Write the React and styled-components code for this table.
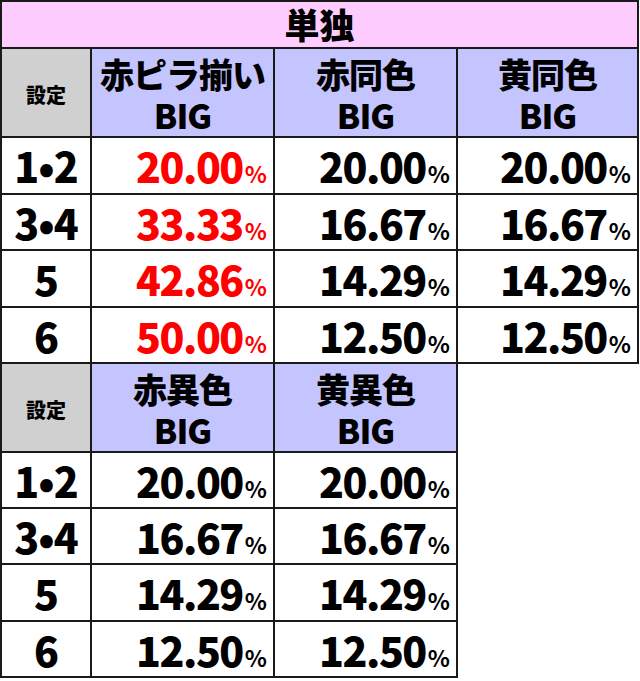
import React from 'react';
import styled, { createGlobalStyle } from 'styled-components';

const GlobalStyle = createGlobalStyle`
  * { box-sizing: border-box; }
  body {
    margin: 0;
    background: #fff;
    font-family: "Noto Sans CJK JP", "Noto Sans", sans-serif;
    color: #000;
  }
`;

const LINE = '#1a1a1a';

const Page = styled.div`
  display: flex;
  flex-direction: column;
  align-items: flex-start;
  width: 640px;
`;

const Table = styled.div`
  display: grid;
  grid-template-columns: ${(p) => p.$cols};
  grid-template-rows: ${(p) => p.$rows};
  border-left: 2px solid ${LINE};
  border-top: ${(p) => (p.$top ? `2px solid ${LINE}` : 'none')};
`;

const Cell = styled.div`
  display: flex;
  align-items: center;
  justify-content: center;
  border-right: 2px solid ${LINE};
  border-bottom: 2px solid ${LINE};
  font-weight: 900;
  color: #000;
`;

const Title = styled(Cell)`
  grid-column: 1 / -1;
  background: #ffccff;
  font-size: 35px;
  line-height: 1;
  padding-bottom: 2px;
`;

const SettingHead = styled(Cell)`
  background: #d0d0d0;
  font-size: 20px;
  line-height: 1;
  padding-top: 4px;
`;

const Head = styled(Cell)`
  flex-direction: column;
  gap: 7px;
  background: #c4c4ff;
  font-size: 34px;
  line-height: 1;
  letter-spacing: -1px;
  text-align: center;
  padding-top: 4px;
`;

const Label = styled(Cell)`
  font-size: 41px;
  line-height: 1;
  letter-spacing: -1px;
`;

const Value = styled(Cell)`
  justify-content: flex-end;
  align-items: baseline;
  padding: 0 6px 0 0;
  color: ${(p) => (p.$red ? '#ff0000' : '#000')};
  line-height: 54px;
`;

const Num = styled.span`
  font-size: 41px;
  letter-spacing: -1.5px;
`;

const Pct = styled.span`
  font-size: 23px;
  font-weight: 700;
  margin-left: 2px;
`;

const settings = ['1•2', '3•4', '5', '6'];

const solo = [
  ['20.00', '20.00', '20.00'],
  ['33.33', '16.67', '16.67'],
  ['42.86', '14.29', '14.29'],
  ['50.00', '12.50', '12.50'],
];

const other = [
  ['20.00', '20.00'],
  ['16.67', '16.67'],
  ['14.29', '14.29'],
  ['12.50', '12.50'],
];

const Rate = ({ value, red }) => (
  <Value $red={red}>
    <Num>{value}</Num>
    <Pct>%</Pct>
  </Value>
);

const HeadText = ({ top }) => (
  <Head>
    <span>{top}</span>
    <span>BIG</span>
  </Head>
);

export default function App() {
  return (
    <Page>
      <GlobalStyle />
      <Table $top $cols="90px 183px 183px 181px" $rows="47px 89px 57px 56px 57px 56px">
        <Title>単独</Title>
        <SettingHead>設定</SettingHead>
        <HeadText top="赤ピラ揃い" />
        <HeadText top="赤同色" />
        <HeadText top="黄同色" />
        {solo.map((row, i) => (
          <React.Fragment key={i}>
            <Label>{settings[i]}</Label>
            {row.map((v, j) => (
              <Rate key={j} value={v} red={j === 0} />
            ))}
          </React.Fragment>
        ))}
      </Table>
      <Table $cols="90px 183px 183px" $rows="89px 56px 56px 57px 56px">
        <SettingHead>設定</SettingHead>
        <HeadText top="赤異色" />
        <HeadText top="黄異色" />
        {other.map((row, i) => (
          <React.Fragment key={i}>
            <Label>{settings[i]}</Label>
            {row.map((v, j) => (
              <Rate key={j} value={v} />
            ))}
          </React.Fragment>
        ))}
      </Table>
    </Page>
  );
}
